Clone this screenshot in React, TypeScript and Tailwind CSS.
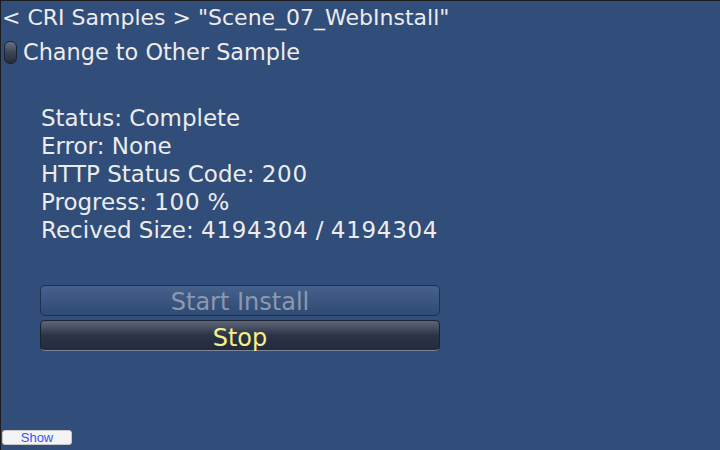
import React from "react";

function N({ children }: { children: React.ReactNode }) {
  return <span className="tracking-[0.7px]">{children}</span>;
}

export default function App() {
  const font = { fontFamily: '"DejaVu Sans", "Noto Sans", sans-serif' };
  return (
    <div
      className="w-[720px] h-[450px] bg-[#314d79] border-t border-l border-[#1c1c1c] flex flex-col text-[#ececec] overflow-hidden"
      style={font}
    >
      <div className="h-[34px] flex items-center pl-[1px] text-[22px] leading-none">
        &lt; CRI Samples &gt; "Scene_07_WebInstall"
      </div>
      <div className="h-[34px] flex items-center gap-[6px] pl-[3px] text-[22.4px] leading-none">
        <div className="w-[13px] h-[23px] rounded-[6px] border border-[#1a2233] bg-gradient-to-b from-[#6a7384] via-[#3c4556] to-[#252d3b]" />
        <span>Change to Other Sample</span>
      </div>
      <div className="mt-[35px] pl-[40px] flex flex-col text-[23px] leading-[28px]">
        <div>Status: Complete</div>
        <div>Error: None</div>
        <div>
          HTTP Status Code: <N>200</N>
        </div>
        <div>
          Progress: <N>100</N> %
        </div>
        <div>
          Recived Size: <N>4194304</N> / <N>4194304</N>
        </div>
      </div>
      <div className="mt-[41px] ml-[39px] w-[400px] flex flex-col gap-[4px]">
        <div className="h-[31px] pt-[3px] rounded-[5px] border border-[#1f3050] bg-gradient-to-b from-[#45618c] to-[#2f4a73] flex items-center justify-center text-[24px] text-[#8c98ad] leading-none">
          Start Install
        </div>
        <div className="h-[31px] pt-[4px] rounded-[5px] border border-[#1a2232] border-b-[#7d8493] bg-gradient-to-b from-[#5e6778] via-[#2b3447] to-[#222b3e] flex items-center justify-center text-[24px] text-[#f8ef86] leading-none">
          Stop
        </div>
      </div>
      <div className="flex-1" />
      <div className="pl-[1px] pb-[5px]">
        <div
          className="w-[70px] h-[15px] rounded-[3px] bg-[#f4f4f4] border border-[#c8c8c8] flex items-center justify-center text-[13px] text-[#2f55ff] leading-none"
          style={{ fontFamily: '"Liberation Sans", Arial, sans-serif' }}
        >
          Show
        </div>
      </div>
    </div>
  );
}
